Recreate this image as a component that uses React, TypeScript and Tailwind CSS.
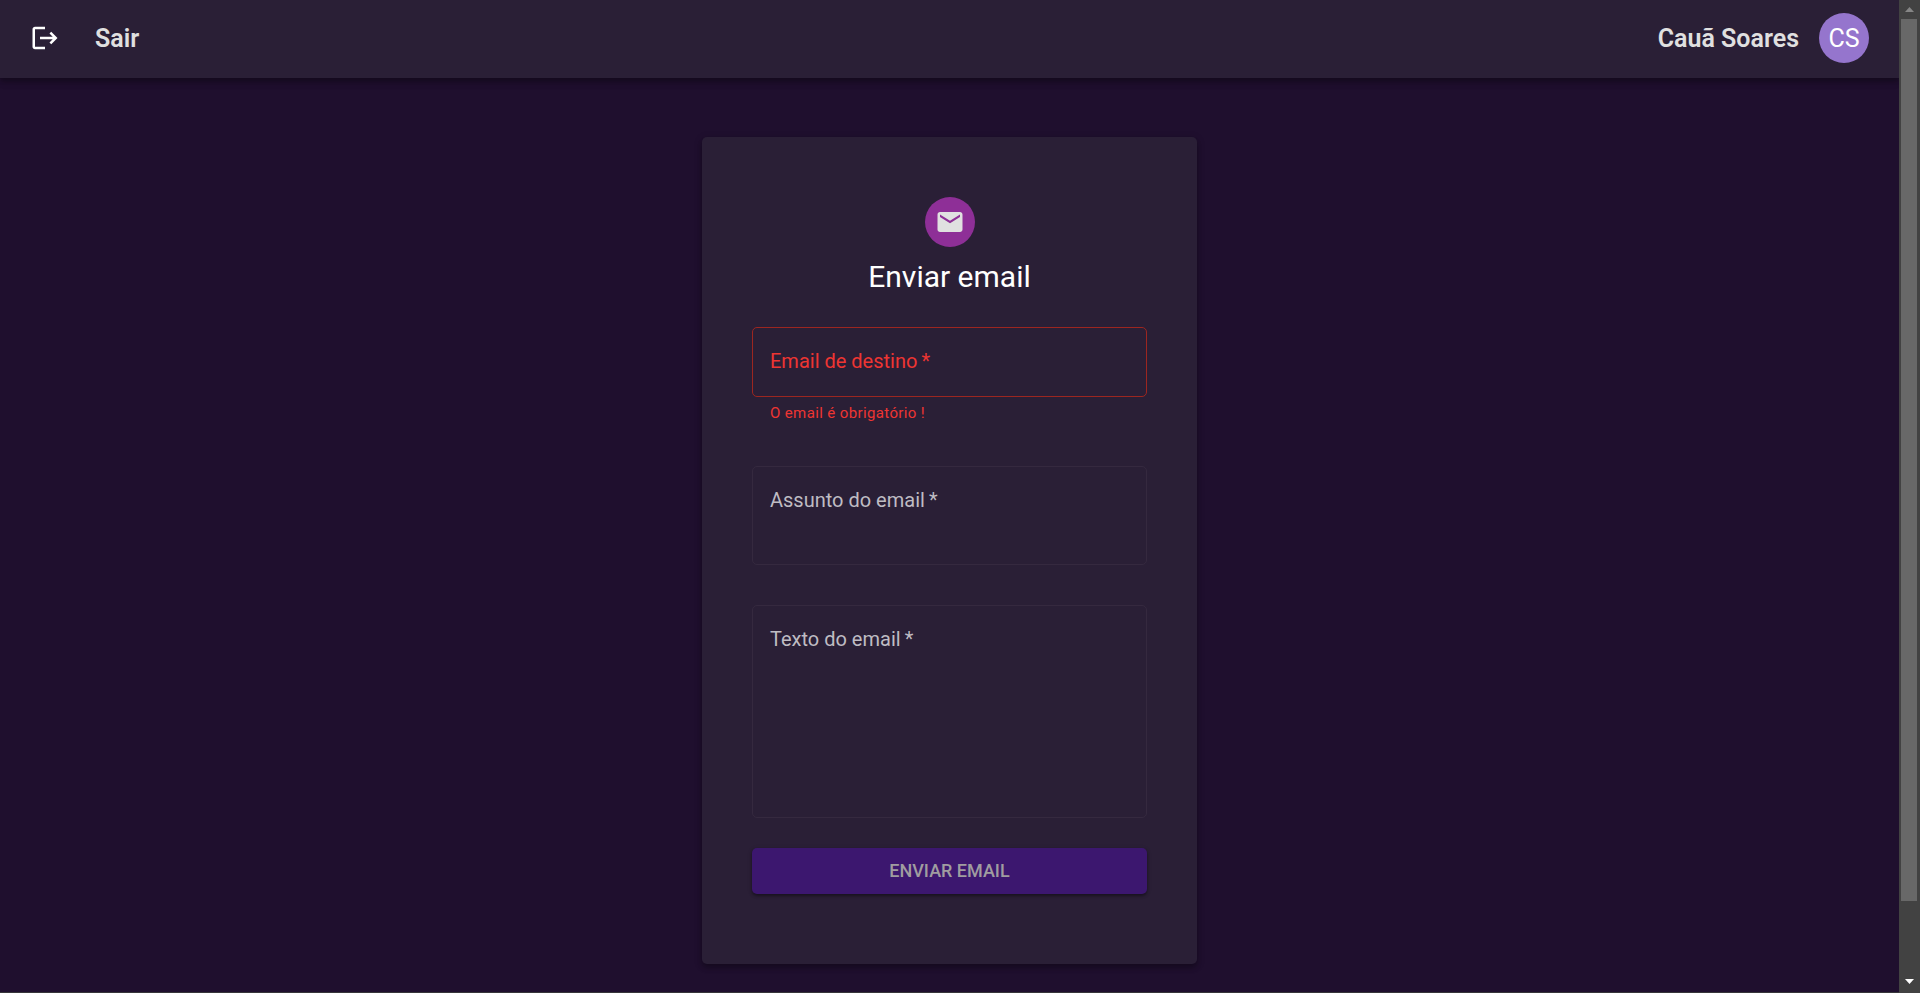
import React from "react";

function LogoutIcon() {
  return (
    <svg viewBox="0 0 24 24" className="size-[30px] fill-white" aria-hidden="true">
      <path d="m17 7-1.41 1.41L18.17 11H8v2h10.17l-2.58 2.58L17 17l5-5zM4 5h8V3H4c-1.1 0-2 .9-2 2v14c0 1.1.9 2 2 2h8v-2H4V5z" />
    </svg>
  );
}

function MailIcon() {
  return (
    <svg viewBox="0 0 24 24" className="size-[30px] fill-[#e0e0e0]" aria-hidden="true">
      <path d="M20 4H4c-1.1 0-1.99.9-1.99 2L2 18c0 1.1.9 2 2 2h16c1.1 0 2-.9 2-2V6c0-1.1-.9-2-2-2zm0 4l-8 5-8-5V6l8 5 8-5v2z" />
    </svg>
  );
}

type FieldProps = {
  id: string;
  label: string;
  error?: string;
  children: React.ReactNode;
};

function Field({ id, label, error, children }: FieldProps) {
  return (
    <div className="flex flex-col">
      <div className="grid">
        <div className="col-start-1 row-start-1 grid">{children}</div>
        <label
          htmlFor={id}
          className={`pointer-events-none col-start-1 row-start-1 self-start px-[18px] py-5 text-xl leading-[29px] ${
            error ? "text-[#ee3532]" : "text-[#bfbcc3]"
          }`}
        >
          {label}
          {"\u2009*"}
        </label>
      </div>
      {error && (
        <p id={`${id}-error`} className="px-[18px] pt-1 text-[15px] leading-[25px] tracking-wide text-[#ee3532]">
          {error}
        </p>
      )}
    </div>
  );
}

function Header() {
  return (
    <header className="flex h-[78px] items-center justify-between bg-[#2a1f36] px-[30px] pb-0.5 shadow-[0_2px_5px_rgba(0,0,0,0.2),0_5px_6px_rgba(0,0,0,0.14),0_1px_12px_rgba(0,0,0,0.12)]">
      <button type="button" className="flex items-center gap-[35px] text-[25px] leading-10 font-semibold text-[#e0e0e0]">
        <LogoutIcon />
        <span className="pt-0.5">Sair</span>
      </button>
      <div className="flex items-center gap-5">
        <span className="pt-0.5 text-[25px] leading-10 font-semibold text-[#e0e0e0]">Cauã Soares</span>
        <span className="flex size-[50px] items-center justify-center rounded-full bg-[#9575cd] pt-0.5 text-[25px] text-white">
          CS
        </span>
      </div>
    </header>
  );
}

function EmailForm() {
  const box = "resize-none rounded-[5px] border bg-transparent px-[17px] py-5 text-xl text-white outline-none";
  return (
    <form
      noValidate
      onSubmit={(event) => event.preventDefault()}
      className="flex w-full max-w-[495px] flex-col rounded-[5px] bg-[#2a1f36] px-[50px] pt-[60px] pb-[70px] shadow-[0_4px_5px_rgba(0,0,0,0.2),0_2px_8px_rgba(0,0,0,0.2)]"
    >
      <div className="flex flex-col items-center gap-2.5 pb-[30px]">
        <span className="flex size-[50px] items-center justify-center rounded-full bg-[#8e2f97]">
          <MailIcon />
        </span>
        <h1 className="text-[30px] leading-10 text-white">Enviar email</h1>
      </div>
      <div className="flex flex-col gap-10">
        <Field id="to" label="Email de destino" error="O email é obrigatório !">
          <input
            id="to"
            type="email"
            required
            aria-invalid="true"
            aria-describedby="to-error"
            className={`${box} h-[70px] border-[#9c2620]`}
          />
        </Field>
        <Field id="subject" label="Assunto do email">
          <textarea id="subject" required className={`${box} h-[99px] border-[#35293f]`} />
        </Field>
        <Field id="body" label="Texto do email">
          <textarea id="body" required className={`${box} h-[213px] border-[#35293f]`} />
        </Field>
      </div>
      <button
        type="submit"
        className="mt-[30px] h-[46px] rounded-[5px] bg-[#3c176f] text-lg font-medium text-[#a09da0] uppercase shadow-[0_2px_3px_rgba(0,0,0,0.35),0_1px_5px_rgba(0,0,0,0.15)]"
      >
        Enviar email
      </button>
    </form>
  );
}

function ScrollRail() {
  return (
    <div
      aria-hidden="true"
      className="sticky top-0 flex h-screen w-[21px] shrink-0 flex-col items-center bg-[#424242] pr-px"
    >
      <svg viewBox="0 0 17 19" className="h-[19px] w-[17px] shrink-0 fill-[#868686]">
        <path d="M8.500 7 13 12H4z" />
      </svg>
      <div className="flex w-full flex-1 flex-col px-0.5">
        <div className="h-[92.500%] bg-[#686868]" />
      </div>
      <svg viewBox="0 0 17 20" className="h-5 w-[17px] shrink-0 fill-white">
        <path d="M4 6h9l-4.500 5z" />
      </svg>
    </div>
  );
}

export default function App() {
  return (
    <div className="flex min-h-screen bg-[#1f0f2e] font-[Roboto,sans-serif]">
      <div className="flex min-w-0 flex-1 flex-col border-b border-[#37363a]">
        <Header />
        <main className="flex flex-1 flex-col items-center px-4 pt-[59px] pb-7">
          <EmailForm />
        </main>
      </div>
      <ScrollRail />
    </div>
  );
}
